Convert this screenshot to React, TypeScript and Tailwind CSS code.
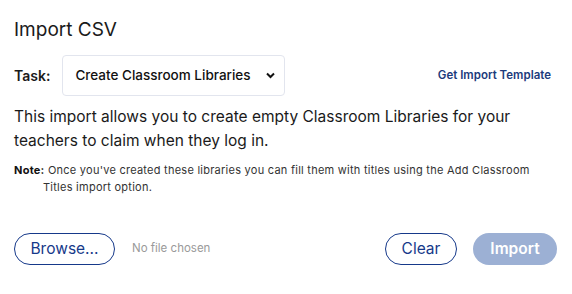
import React, { useState } from "react";

const TASKS = [
  "Create Classroom Libraries",
  "Add Classroom Titles",
  "Import Students",
];

export default function App() {
  const [task, setTask] = useState(TASKS[0]);
  const [fileName, setFileName] = useState<string | null>(null);

  return (
    <div
      className="w-[572px] h-[294px] bg-white text-[#1a1a1a] px-[14px] pt-[18px]"
      style={{ fontFamily: "Inter, 'Noto Sans', sans-serif" }}
    >
      <h1 className="text-[19px] leading-[24px] font-normal">Import CSV</h1>

      {/* Task picker */}
      <div className="flex flex-row items-center justify-between mt-[13px]">
        <div className="flex flex-row items-center gap-[12px]">
          <label className="text-[14px] font-semibold">Task:</label>
          <div className="relative">
            <select
              value={task}
              onChange={(e) => setTask(e.target.value)}
              className="appearance-none w-[223px] h-[41px] border border-[#e2e5ee] rounded-[4px] pl-[12px] pr-[28px] text-[13.5px] font-medium text-[#111] bg-white outline-none"
            >
              {TASKS.map((t) => (
                <option key={t}>{t}</option>
              ))}
            </select>
            <svg
              className="absolute right-[10px] top-[17px] pointer-events-none"
              width="9"
              height="7"
              viewBox="0 0 9 7"
            >
              <path
                d="M1 1.5 L4.5 5 L8 1.5"
                fill="none"
                stroke="#111"
                strokeWidth="2"
              />
            </svg>
          </div>
        </div>
        <a className="text-[11.5px] font-semibold text-[#1c3b7c] mr-[7px] cursor-pointer">
          Get Import Template
        </a>
      </div>

      <p className="text-[15.5px] leading-[24px] mt-[9px] text-[#1a1a1a]">
        This import allows you to create empty Classroom Libraries for your
        teachers to claim when they log in.
      </p>

      <p className="text-[11px] leading-[17px] mt-[9px] pl-[29px] -indent-[29px] pr-[12px] tracking-[0.25px] text-[#333]">
        <span className="font-bold text-[#111]">Note:</span> Once you've
        created these libraries you can fill them with titles using the Add
        Classroom Titles import option.
      </p>

      {/* Actions */}
      <div className="flex flex-row items-center justify-between mt-[37px] pr-[1px]">
        <div className="flex flex-row items-center gap-[17px]">
          <label className="h-[32px] w-[101px] border border-[#16398a] rounded-full flex items-center justify-center text-[15.5px] text-[#16398a] cursor-pointer">
            Browse...
            <input
              type="file"
              className="hidden"
              onChange={(e) => setFileName(e.target.files?.[0]?.name ?? null)}
            />
          </label>
          <span className="text-[11.5px] text-[#9a9a9a]">
            {fileName ?? "No file chosen"}
          </span>
        </div>
        <div className="flex flex-row items-center gap-[16px]">
          <button
            onClick={() => setFileName(null)}
            className="h-[32px] w-[72px] border border-[#16398a] rounded-full text-[15.5px] text-[#16398a]"
          >
            Clear
          </button>
          <button
            disabled={!fileName}
            className="h-[32px] w-[84px] rounded-full bg-[#9cb0d4] text-[15.5px] font-semibold text-white"
          >
            Import
          </button>
        </div>
      </div>
    </div>
  );
}
